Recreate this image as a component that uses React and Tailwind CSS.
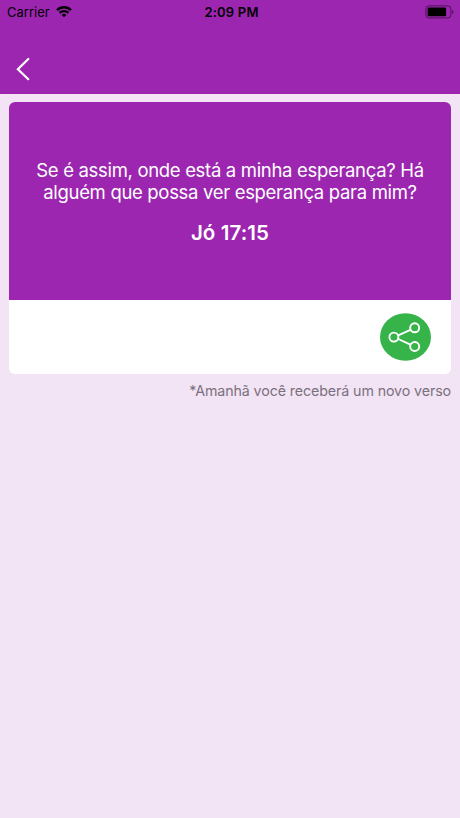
function StatusBar() {
  return (
    <div className="grid h-6 grid-cols-3 items-center pl-[7px] pr-[6px] text-black">
      <div className="flex items-center gap-[6px]">
        <span className="text-[13px] leading-6">Carrier</span>
        <svg width="16" height="12" viewBox="0 0 16 12" fill="none" stroke="currentColor" strokeWidth="2.4">
          <path d="M1 4.1a10 10 0 0 1 14 0" />
          <path d="M3.6 6.9a6.3 6.3 0 0 1 8.8 0" />
          <path d="M8 11.3 5.7 9a3.2 3.2 0 0 1 4.6 0Z" fill="currentColor" stroke="none" />
        </svg>
      </div>
      <span className="pl-[2px] text-center text-[13px] font-semibold leading-6 tracking-[0.2px]">2:09 PM</span>
      <svg className="justify-self-end" width="29" height="14" viewBox="0 0 29 14" fill="none">
        <rect x="0.9" y="0.9" width="25" height="12" rx="3" stroke="#000" strokeOpacity="0.5" />
        <rect x="2.6" y="2.6" width="18.5" height="8.6" rx="1.2" fill="#000" />
        <path d="M27.2 5v4q1.4-.6 1.4-2t-1.4-2Z" fill="#000" fillOpacity="0.5" />
      </svg>
    </div>
  );
}

function ShareButton() {
  return (
    <button aria-label="Compartilhar" className="h-[48px] w-[51px]">
      <svg width="51" height="48" viewBox="0 0 51 48" fill="none" stroke="#fff" strokeWidth="1.9">
        <ellipse cx="25.5" cy="24" rx="25.5" ry="23.8" fill="#36b449" stroke="none" />
        <path d="M18.2 22.3 30.4 16.8M18.2 26l12.2 5.6" />
        <circle cx="13.9" cy="24.1" r="4.5" />
        <circle cx="34.7" cy="14.8" r="4.5" />
        <circle cx="34.7" cy="33.5" r="4.5" />
      </svg>
    </button>
  );
}

export default function App() {
  return (
    <div className="flex h-[818px] w-[460px] flex-col bg-[#f2e4f4] font-['Inter','Liberation_Sans',sans-serif]">
      <header className="h-[94px] bg-[#9c26b0]">
        <StatusBar />
        <button aria-label="Voltar" className="ml-[16px] mt-[33px] block">
          <svg width="14" height="24" viewBox="0 0 14 24" fill="none" stroke="#fff" strokeWidth="2.2" strokeLinecap="round">
            <path d="M12.3 2 1.9 12.2 12.3 22.2" />
          </svg>
        </button>
      </header>
      <main className="px-[9px] pt-[8px]">
        <section className="overflow-hidden rounded-[6px] bg-white">
          <div className="flex h-[198px] flex-col items-center bg-[#9c26b0] pt-[57px] text-center text-white">
            <p className="whitespace-nowrap text-[18.5px] leading-[22px] tracking-[-0.32px]">
              Se é assim, onde está a minha esperança? Há
              <br />
              alguém que possa ver esperança para mim?
            </p>
            <p className="mt-[18px] text-[20.5px] font-semibold leading-6 tracking-[0.1px]">Jó 17:15</p>
          </div>
          <div className="flex h-[74px] justify-end pr-[20px] pt-[13px]">
            <ShareButton />
          </div>
        </section>
        <p className="mt-[7px] whitespace-nowrap text-right text-[14.25px] leading-5 tracking-[-0.11px] text-[#7b717e]">
          *Amanhã você receberá um novo verso
        </p>
      </main>
    </div>
  );
}
